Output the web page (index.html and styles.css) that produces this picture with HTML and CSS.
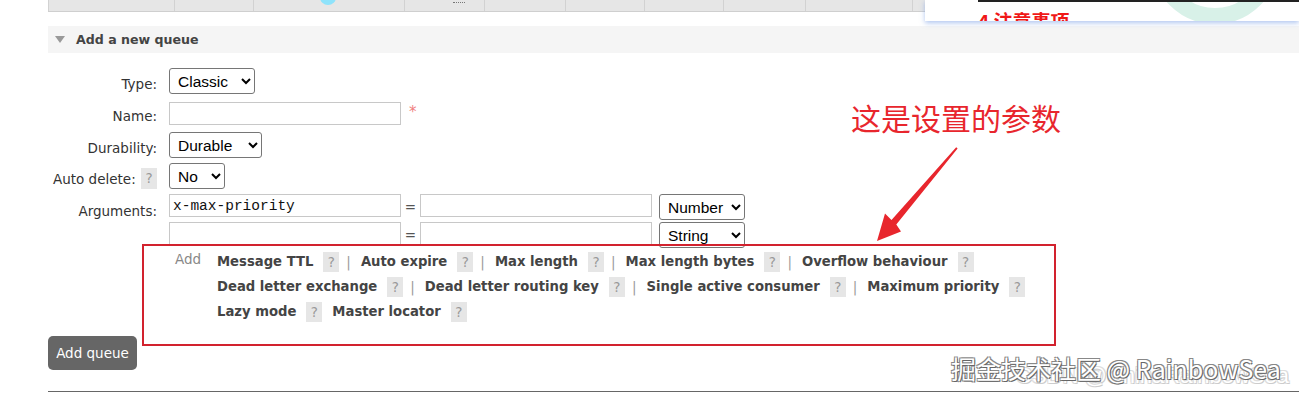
FILE: index.html
```html
<!DOCTYPE html>
<html lang="en">
<head>
    <meta charset="UTF-8">
    <title>Queues</title>
    <link rel="stylesheet" href="styles.css">
</head>
<body>
    <div class="page">
        <div class="strip">
            <div class="cell w1"><span class="glyph">gy</span></div>
            <div class="cell w2"></div>
            <div class="cell w3"><span class="blob"></span></div>
            <div class="cell w4"><span class="dots"></span></div>
            <div class="cell w5"></div>
            <div class="cell w6"></div>
            <div class="cell w7"></div>
            <div class="cell w8"></div>
            <div class="cell w9"></div>
            <div class="cell rest"></div>
        </div>

        <h2 class="section-title"><span class="tri"></span>Add a new queue</h2>

        <div class="form">
            <div class="row row-type">
                <label class="lbl">Type:</label>
                <div class="field">
                    <select class="sel sel-type"><option>Classic</option></select>
                </div>
            </div>

            <div class="row row-name">
                <label class="lbl">Name:</label>
                <div class="field">
                    <input type="text" class="txt"><span class="mand">*</span>
                </div>
            </div>

            <div class="row row-dur">
                <label class="lbl">Durability:</label>
                <div class="field">
                    <select class="sel sel-dur"><option>Durable</option></select>
                </div>
            </div>

            <div class="row row-auto">
                <label class="lbl">Auto delete: <span class="help">?</span></label>
                <div class="field">
                    <select class="sel sel-no"><option>No</option></select>
                </div>
            </div>

            <div class="row row-args">
                <label class="lbl lbl-args">Arguments:</label>
                <div class="args">
                    <div class="arg-row">
                        <input type="text" class="txt mono" value="x-max-priority">
                        <span class="eq">=</span>
                        <input type="text" class="txt">
                        <select class="sel sel-kind"><option>Number</option></select>
                    </div>
                    <div class="arg-row">
                        <input type="text" class="txt mono">
                        <span class="eq">=</span>
                        <input type="text" class="txt">
                        <select class="sel sel-kind"><option>String</option></select>
                    </div>
                    <div class="add-row">
                        <span class="add-label">Add</span>
                        <div class="add-links">
                            <div class="line">
                                <a>Message TTL</a><span class="help">?</span><span class="sep">|</span>
                                <a>Auto expire</a><span class="help">?</span><span class="sep">|</span>
                                <a>Max length</a><span class="help">?</span><span class="sep">|</span>
                                <a>Max length bytes</a><span class="help">?</span><span class="sep">|</span>
                                <a>Overflow behaviour</a><span class="help">?</span>
                            </div>
                            <div class="line">
                                <a>Dead letter exchange</a><span class="help">?</span><span class="sep">|</span>
                                <a>Dead letter routing key</a><span class="help">?</span><span class="sep">|</span>
                                <a>Single active consumer</a><span class="help">?</span><span class="sep">|</span>
                                <a>Maximum priority</a><span class="help">?</span>
                            </div>
                            <div class="line">
                                <a>Lazy mode</a><span class="help">?</span>
                                <a class="after-help">Master locator</a><span class="help">?</span>
                            </div>
                        </div>
                    </div>
                </div>
            </div>
        </div>

        <button class="add-btn">Add queue</button>

        <div class="rule"></div>
    </div>

    <!-- screenshot overlays -->
    <div class="card">
        <svg class="ring" width="200" height="30" viewBox="0 0 200 30">
            <circle cx="100" cy="-40" r="56" fill="none" stroke="#d8f1e8" stroke-width="16"/>
        </svg>
        <div class="card-inner">
            <span class="card-title">4 注意事项</span>
        </div>
    </div>

    <div class="note">这是设置的参数</div>

    <svg class="arrow" width="1299" height="395" viewBox="0 0 1299 395">
        <polygon fill="#e8262d" points="957.6,148.6 956.2,147.3 891.5,220 885,213.5 877,241 901,231.5 896.3,224.4"/>
    </svg>

    <div class="red-box"></div>

    <div class="mark-back">CSDN @ChinaRainbowSea</div>
    <div class="mark">掘金技术社区 @ RainbowSea</div>
</body>
</html>
```

FILE: styles.css
```css
body {
    margin: 0;
    background: #fff;
    font-family: "DejaVu Sans", Verdana, sans-serif;
    font-size: 13.5px;
    color: #333;
    overflow: hidden;
}
.page {
    padding-left: 48px;
}
.strip {
    display: flex;
    height: 11px;
    background: #e6e6e6;
    border-bottom: 1px solid #cfcfcf;
    overflow: hidden;
}
.cell {
    position: relative;
    border-left: 1px solid #d2d2d2;
    box-sizing: border-box;
}
.w1 { width: 126px; }
.w2 { width: 79px; }
.w3 { width: 151px; }
.w4 { width: 80px; }
.w5 { width: 81px; }
.w6 { width: 79px; }
.w7 { width: 79px; }
.w8 { width: 82px; }
.w9 { width: 107px; }
.rest { flex: 1; }
.glyph {
    position: absolute;
    left: 62px;
    top: -19px;
    font-size: 16px;
    font-weight: bold;
    color: #111;
}
.blob {
    position: absolute;
    left: 66px;
    top: -10px;
    width: 16px;
    height: 15px;
    border-radius: 50%;
    background: #8fe3fb;
}
.dots {
    position: absolute;
    left: 48px;
    top: 2px;
    width: 12px;
    border-top: 1px dotted #777;
}
.section-title {
    display: flex;
    align-items: center;
    margin: 14px 0 0;
    height: 27px;
    padding-left: 7px;
    background: #f5f5f5;
    font-size: 12.6px;
    font-weight: bold;
    color: #444;
}
.tri {
    width: 0;
    height: 0;
    border-left: 5px solid transparent;
    border-right: 5px solid transparent;
    border-top: 7px solid #999;
    margin-right: 11px;
}
.form {
    margin-top: 15px;
}
.row {
    display: flex;
    align-items: flex-start;
    min-height: 26px;
}
.row-name { margin-top: 6px; }
.row-dur { margin-top: 6px; }
.row-auto { margin-top: 5px; }
.row-args { margin-top: 5px; }
.lbl {
    width: 109px;
    margin-right: 12px;
    flex: none;
    text-align: right;
    padding-top: 6px;
    height: 20px;
    line-height: 20px;
    white-space: nowrap;
    color: #333;
}
.lbl-args {
    padding-top: 7px;
}
.field {
    display: flex;
    align-items: center;
    align-self: center;
}
.sel {
    height: 26px;
    border: 1px solid #767676;
    border-radius: 3px;
    background: #fff;
    font-family: "Liberation Sans", Arial, sans-serif;
    font-size: 15.5px;
    color: #000;
    padding: 0 2px 0 4px;
}
.sel-type { width: 86px; }
.sel-dur { width: 93px; }
.sel-no { width: 56px; }
.sel-kind { width: 86px; margin-left: 7px; }
.txt {
    width: 232px;
    height: 23px;
    box-sizing: border-box;
    border: 1px solid #c8c8c8;
    padding: 0 3px;
    margin: 0;
    font-family: "Liberation Sans", Arial, sans-serif;
    font-size: 14px;
}
.mono {
    font-family: "Liberation Mono", "Courier New", monospace;
    font-size: 14.5px;
    color: #111;
}
.mand {
    color: #f08080;
    margin-left: 8px;
    font-size: 15px;
    position: relative;
    top: -1px;
}
.help {
    display: inline-block;
    width: 16px;
    height: 21px;
    line-height: 21px;
    text-align: center;
    background: #e6e6e6;
    color: #999;
    font-weight: normal;
    font-size: 13.5px;
    vertical-align: top;
}
.lbl .help {
    margin-left: 1px;
    position: relative;
    top: -1px;
}
.arg-row {
    display: flex;
    align-items: flex-start;
    height: 28px;
}
.eq {
    width: 19px;
    text-align: center;
    line-height: 26px;
    color: #555;
}
.add-row {
    display: flex;
    margin-top: -1px;
}
.add-label {
    width: 42px;
    padding-left: 6px;
    color: #888;
    line-height: 20px;
}
.add-links .line {
    display: flex;
    align-items: center;
    height: 25px;
    white-space: nowrap;
}
.add-links a {
    font-weight: bold;
    font-size: 13.2px;
    color: #444;
    margin-right: 10px;
}
.add-links .help {
    height: 20px;
    line-height: 20px;
}
.add-links .sep {
    color: #9a9a9a;
    margin: 0 10px 0 7px;
}
.add-links a.after-help {
    margin-left: 10px;
}
.add-btn {
    display: block;
    margin-top: 12px;
    width: 89px;
    height: 34px;
    border: none;
    border-radius: 5px;
    background: #666;
    color: #fff;
    font-family: "DejaVu Sans", Verdana, sans-serif;
    font-size: 13.5px;
    padding: 0;
}
.rule {
    margin-top: 21px;
    border-top: 1px solid #666;
}

.card {
    position: absolute;
    left: 925px;
    top: 0;
    width: 374px;
    height: 21px;
    background: #fff;
    box-shadow: 0 2px 5px rgba(110, 150, 225, 0.55);
    overflow: hidden;
}
.ring {
    position: absolute;
    left: 190px;
    top: 0;
}
.card-inner {
    position: relative;
    margin-left: 53px;
    height: 19px;
    border-top: 2px solid #222;
}
.card-title {
    position: absolute;
    left: 0;
    top: 9px;
    font-family: "Noto Sans CJK SC", sans-serif;
    font-weight: bold;
    font-size: 19px;
    color: #f01818;
    line-height: 1;
}
.note {
    position: absolute;
    left: 851px;
    top: 100px;
    font-family: "Noto Sans CJK SC", sans-serif;
    font-size: 30px;
    line-height: 34px;
    color: #e8262d;
}
.arrow {
    position: absolute;
    left: 0;
    top: 0;
}
.red-box {
    position: absolute;
    left: 142px;
    top: 244px;
    width: 914px;
    height: 102px;
    box-sizing: border-box;
    border: 2px solid #d2222e;
}
.mark, .mark-back {
    position: absolute;
    white-space: nowrap;
    color: #fff;
}
.mark {
    left: 951px;
    top: 353px;
    font-family: "Noto Sans CJK SC", sans-serif;
    font-size: 25px;
    line-height: 30px;
    text-shadow: 1px 1px 0 #666, -1px -1px 0 #888, 1px -1px 0 #888, -1px 1px 0 #888;
}
.mark-back {
    left: 1016px;
    top: 363px;
    font-family: "Liberation Sans", Arial, sans-serif;
    font-size: 22px;
    line-height: 26px;
    text-shadow: 1px 1px 0 #ccc, -1px -1px 0 #ddd, 1px -1px 0 #ddd, -1px 1px 0 #ddd;
}
```
